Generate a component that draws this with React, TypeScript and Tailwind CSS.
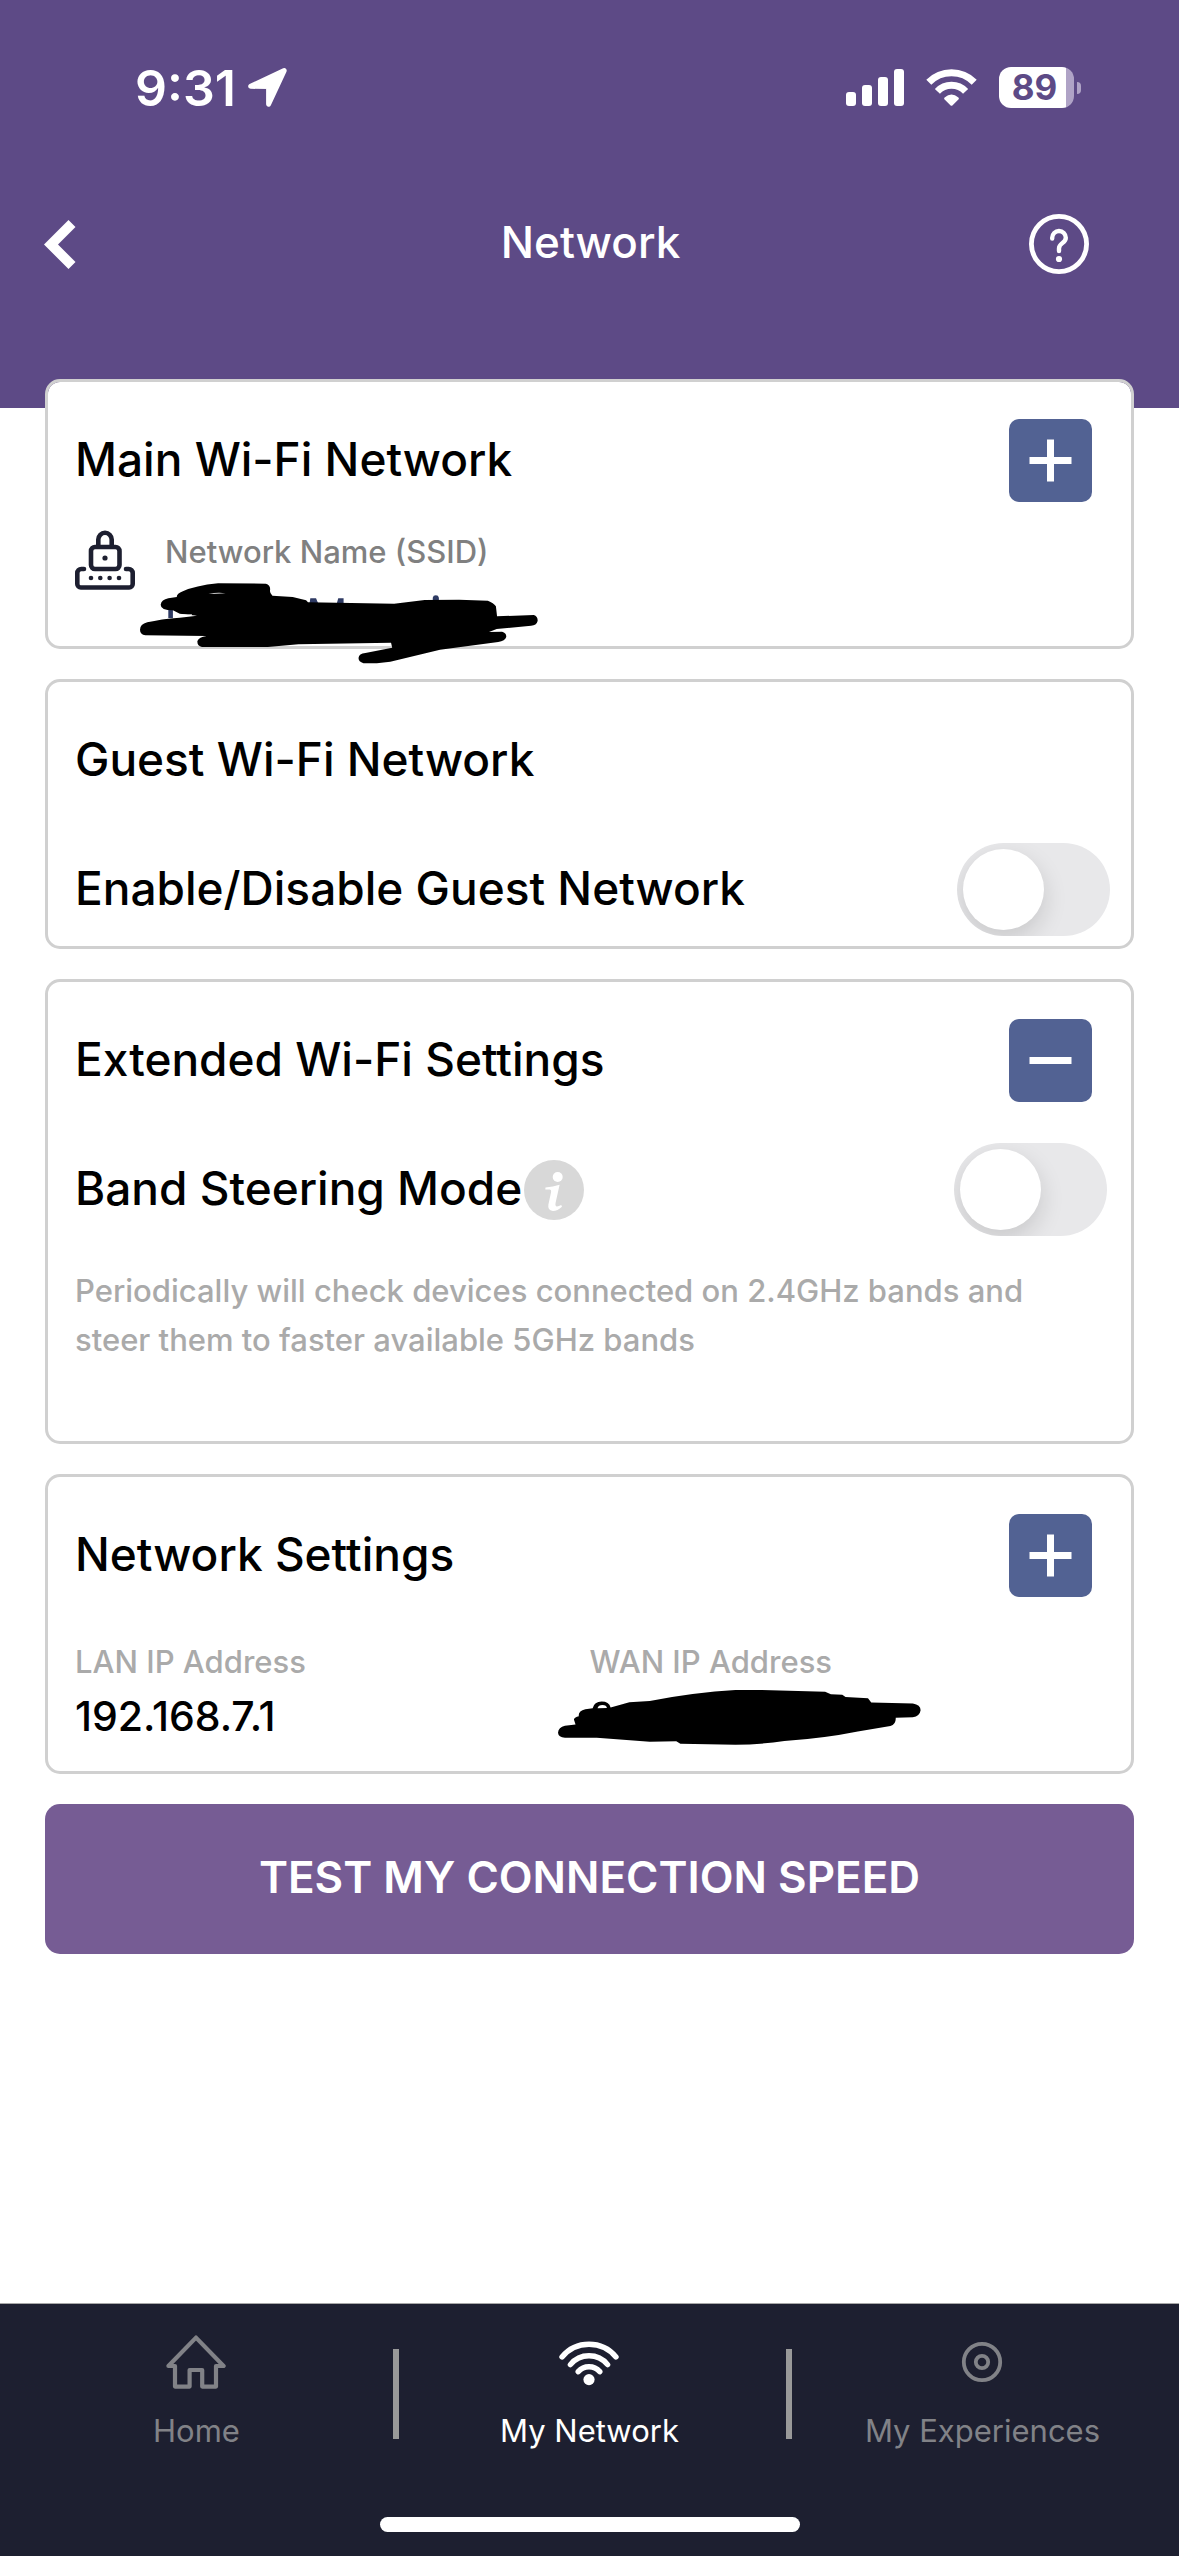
import React, { useState } from "react";

const StatusBar = () => {
  return (
    <div className="flex h-[41px] items-center justify-between pl-[135px] pr-[98px]">
      <div className="flex items-center gap-3">
        <span className="text-[50px] font-semibold leading-none">9:31</span>
        <svg className="h-[39px] w-[39px]" viewBox="0 0 39 39">
          <path
            d="M2.6 18.3 36.2 2.6 20.6 36.2V18.6Z"
            fill="currentColor"
            stroke="currentColor"
            strokeWidth="5"
            strokeLinejoin="round"
          />
        </svg>
      </div>
      <div className="flex items-center gap-[22px]">
        <svg className="h-[37px] w-[58px]" viewBox="0 0 58 37" fill="currentColor">
          <rect x="0" y="23" width="10" height="14" rx="3" />
          <rect x="16" y="16" width="10" height="21" rx="3" />
          <rect x="32" y="8" width="10" height="29" rx="3" />
          <rect x="48" y="0" width="10" height="37" rx="3" />
        </svg>
        <svg className="h-[37px] w-[51px]" viewBox="0 0 51 37" fill="none">
          <path
            d="M2.8 13.3A31.8 31.8 0 0 1 48.2 13.3M11.4 22.3A19.4 19.4 0 0 1 39.6 22.3"
            stroke="currentColor"
            strokeWidth="7"
          />
          <path
            d="M18.6 28.6Q25.5 22.6 32.4 28.6Q33.4 29.6 32.4 30.6L26.4 36.4Q25.5 37.2 24.6 36.4L18.6 30.6Q17.6 29.6 18.6 28.6Z"
            fill="currentColor"
          />
        </svg>
        <div className="flex items-center gap-[3px]">
          <div className="flex h-[41px] w-[75px] items-center justify-center rounded-xl bg-linear-to-r from-white from-89% to-[#afa3c6] to-89% pr-1 text-[35px] font-bold leading-none text-[#5d4a86]">
            89
          </div>
          <div className="h-3 w-1 rounded-r-full bg-[#afa3c6]"></div>
        </div>
      </div>
    </div>
  );
};

const Header = () => {
  return (
    <header className="bg-[#5d4a86] pt-[67px] pb-[134px] text-white">
      <StatusBar />
      <div className="mt-[106px] grid grid-cols-[1fr_auto_1fr] items-center pr-[90px] pl-11">
        <button type="button" aria-label="Back" className="w-8">
          <svg className="h-[49px] w-8" viewBox="0 0 32 49">
            <path d="M24.5 0 31.5 7 14 24.5 31.5 42 24.5 49 0 24.5Z" fill="currentColor" />
          </svg>
        </button>
        <h1 className="pb-1 pl-12 text-[44px] font-medium leading-none">Network</h1>
        <button type="button" aria-label="Help" className="justify-self-end">
          <svg className="h-[60px] w-[60px]" viewBox="0 0 60 60" fill="none">
            <circle cx="30" cy="30" r="27.6" stroke="currentColor" strokeWidth="4.8" />
            <path
              d="M23.2 24.5V23.8A6.8 6.8 0 0 1 36.8 23.8C36.8 29.5 30 28.5 30 34.5V37"
              stroke="currentColor"
              strokeWidth="4.4"
              strokeLinecap="round"
            />
            <circle cx="30" cy="45" r="3.1" fill="currentColor" />
          </svg>
        </button>
      </div>
    </header>
  );
};

const LockIcon = () => {
  return (
    <svg className="h-[60px] w-[60px] shrink-0" viewBox="0 0 60 60" fill="none">
      <g stroke="#1d1f30" strokeWidth="4.6">
        <path d="M23.3 16V9.5A6.7 6.7 0 0 1 36.7 9.5V16" />
        <rect x="16" y="17" width="28.5" height="22" rx="4" />
        <path
          d="M9 39H6.3A4 4 0 0 0 2.3 43V54A3.5 3.5 0 0 0 5.8 57.5H54.2A3.5 3.5 0 0 0 57.7 54V43A4 4 0 0 0 53.7 39H51"
          strokeLinecap="round"
        />
      </g>
      <g fill="#1d1f30">
        <circle cx="30" cy="28" r="2.6" />
        <circle cx="16" cy="48" r="2.3" />
        <circle cx="25.3" cy="48" r="2.3" />
        <circle cx="34.6" cy="48" r="2.3" />
        <circle cx="44" cy="48" r="2.3" />
      </g>
    </svg>
  );
};

const InfoIcon = () => {
  return (
    <svg className="h-[60px] w-[60px]" viewBox="0 0 60 60">
      <circle cx="30" cy="30" r="30" fill="#d8d8d8" />
      <circle cx="33.7" cy="17" r="5" fill="#fff" />
      <path
        d="M21.5 27.4Q29 26.8 35.6 24.8L31.6 42.8Q30.9 46.6 33 46.6Q34.8 46.4 37.2 45L38 46.8Q33.6 51 28.8 51Q23.4 50.6 24.4 44.6L27 32.6Q27.6 29.8 25.4 29.6L21.3 29.6Z"
        fill="#fff"
      />
    </svg>
  );
};

type CardProps = {
  title: string;
  open?: boolean;
  className: string;
  children: React.ReactNode;
};

const Card = ({ title, open, className, children }: CardProps) => {
  return (
    <section
      className={`rounded-[15px] border-3 border-[#d0d0d0] bg-white bg-clip-padding pt-[37px] pl-[27px] ${className}`}
    >
      <div className="flex h-[83px] items-center justify-between pr-[39px]">
        <h2 className="pb-1 text-[46px] font-medium leading-none">{title}</h2>
        {open !== undefined && (
          <button
            type="button"
            aria-label={open ? "Collapse" : "Expand"}
            className="h-[83px] w-[83px] rounded-[10px] bg-[#526293]"
          >
            <svg className="h-full w-full" viewBox="0 0 83 83" stroke="#fff" strokeWidth="7">
              <path d={open ? "M20.5 41.5H62.5" : "M20.5 41.5H62.5M41.5 20.5V62.5"} />
            </svg>
          </button>
        )}
      </div>
      {children}
    </section>
  );
};

type ToggleProps = {
  id: string;
  label: string;
  className: string;
  children?: React.ReactNode;
};

const Toggle = ({ id, label, className, children }: ToggleProps) => {
  const [checked, setChecked] = useState(false);
  return (
    <div className={`mt-[41px] flex items-center justify-between ${className}`}>
      <div className="flex items-center gap-0.5">
        <label htmlFor={id} className="pb-1 text-[46px] font-medium leading-none">
          {label}
        </label>
        {children}
      </div>
      <input
        id={id}
        type="checkbox"
        role="switch"
        checked={checked}
        onChange={(e) => setChecked(e.target.checked)}
        className="h-[93px] w-[153px] shrink-0 appearance-none overflow-hidden rounded-full bg-[#e8e8ea] p-1.5 before:block before:h-[81px] before:w-[81px] before:rounded-full before:bg-white before:shadow-[0_9px_24px_rgba(0,0,0,0.14)] checked:bg-[#526293] checked:before:translate-x-[60px]"
      />
    </div>
  );
};

const tabs = [
  {
    name: "Home",
    color: "text-[#818287]",
    icon: (
      <path
        d="M9 31H2.4L30 2.6 57.6 31H50V51.6H36.2V35H23.6V51.6H9Z"
        stroke="currentColor"
        strokeWidth="4.2"
        strokeLinejoin="round"
      />
    ),
  },
  {
    name: "My Network",
    color: "text-white",
    icon: (
      <>
        <path
          d="M3 22A35 35 0 0 1 57 22M11.4 29.6A24 24 0 0 1 48.6 29.6M19.2 36.6A14.4 14.4 0 0 1 40.8 36.6"
          stroke="currentColor"
          strokeWidth="5.4"
          strokeLinecap="round"
        />
        <circle cx="30" cy="44.6" r="5.6" fill="currentColor" />
      </>
    ),
  },
  {
    name: "My Experiences",
    color: "text-[#818287]",
    icon: (
      <>
        <circle cx="30" cy="27" r="18.2" stroke="currentColor" strokeWidth="3.8" />
        <circle cx="30" cy="27" r="6.2" stroke="currentColor" strokeWidth="3.8" />
      </>
    ),
  },
];

const TabBar = () => {
  return (
    <footer className="mt-auto border-t border-[#a7a7a7] bg-[#1d1f30] pb-6">
      <nav className="grid grid-cols-3 pt-[31px]">
        {tabs.map((tab, i) => (
          <div key={tab.name} className="flex h-[182px] justify-between">
            <div className={`mt-[14px] h-[90px] w-1.5 ${i > 0 ? "bg-[#999]" : ""}`}></div>
            <a href="#" className={`flex flex-col items-center gap-6 ${tab.color}`}>
              <svg className="h-[54px] w-[60px]" viewBox="0 0 60 54" fill="none">
                {tab.icon}
              </svg>
              <span className="text-[31px] leading-[36px]">{tab.name}</span>
            </a>
            <div className="w-1.5"></div>
          </div>
        ))}
      </nav>
      <div className="mx-auto h-[15px] w-[420px] rounded-full bg-white"></div>
    </footer>
  );
};

const App = () => {
  return (
    <div className="flex min-h-screen flex-col bg-white font-[Inter,sans-serif] text-black">
      <Header />
      <main className="-mt-[29px] flex flex-col gap-[30px] px-[45px] pb-[30px]">
        <Card title="Main Wi-Fi Network" open={false} className="pb-14">
          <div className="relative mt-7 flex h-[60px] gap-[30px]">
            <LockIcon />
            <p className="text-[31px] font-medium leading-[44px] text-[#808080]">
              Network Name (SSID)
            </p>
            <svg
              className="absolute top-[53px] left-[65px] h-[81px] w-[398px]"
              viewBox="366 640 1040 243"
              preserveAspectRatio="none"
            >
              <path
                d="M440 718H452V745H440ZM811 686H826L832 702H809ZM884 686H898V702H880ZM1131 692V684Q1132 677 1139 677T1147 684V692Z"
                fill="#2e3a63"
              />
              <path d="M366 780Q366 764 385 758Q420 748 470 744L515 738L470 732L452 722Q420 722 420 705Q422 690 440 686L462 682Q462 672 478 665Q510 648 570 641L695 642Q707 646 706 660Q704 670 712 678L765 682L800 692L805 698L1030 702L1110 691L1200 690L1275 693Q1290 700 1296 710L1299 740L1395 736Q1406 740 1405 754Q1402 768 1388 768L1298 778L1278 787L1312 786Q1324 790 1323 802Q1320 814 1302 817L1150 840L1020 876L985 881L950 881Q937 876 937 865Q938 852 955 850L1025 834L1022 819L860 822L780 824L700 832L640 832L528 832Q515 828 516 814Q520 802 540 799L380 797Q366 794 366 780Z" />
              <path d="M545 673Q570 666 590 671Z" fill="#fff" />
              <path d="M462 732Q480 735 502 734L500 738Q480 740 462 737Z" fill="#fff" />
            </svg>
          </div>
        </Card>

        <Card title="Guest Wi-Fi Network" className="pb-2.5">
          <Toggle id="guest" label="Enable/Disable Guest Network" className="pr-[21px]" />
        </Card>

        <Card title="Extended Wi-Fi Settings" open={true} className="pb-[77px]">
          <Toggle id="steering" label="Band Steering Mode" className="pr-6">
            <button type="button" aria-label="About band steering">
              <InfoIcon />
            </button>
          </Toggle>
          <p className="mt-[30px] pr-[39px] text-[31px] font-medium leading-[49px] text-[#aaa]">
            Periodically will check devices connected on 2.4GHz bands and steer
            them to faster available 5GHz bands
          </p>
        </Card>

        <Card title="Network Settings" open={false} className="pb-[22px]">
          <dl className="mt-[42px] grid grid-cols-2 pr-[27px]">
            <div>
              <dt className="text-[31px] font-medium leading-[45px] text-[#aaa]">
                LAN IP Address
              </dt>
              <dd className="text-[41px] font-medium leading-[65px]">192.168.7.1</dd>
            </div>
            <div className="relative">
              <dt className="text-[31px] font-medium leading-[45px] text-[#aaa]">
                WAN IP Address
              </dt>
              <dd>
                <svg
                  className="absolute top-[51px] -left-8 h-[55px] w-[363px]"
                  viewBox="45 689 890 166"
                  preserveAspectRatio="none"
                >
                  <path d="M45 818Q46 802 62 797L88 793L84 778Q86 770 96 768Q94 752 112 747L130 744Q134 724 152 724T174 742L196 734L220 726L270 722Q380 696 480 689H540L700 694L714 702L742 703L750 710L805 714L813 727L915 730Q934 734 934 750Q932 768 915 771L873 773Q874 792 860 798L780 814Q700 834 600 843Q540 854 480 854L345 851L335 844L270 845L140 833H62Q46 832 45 818Z" />
                  <path d="M142 744Q144 734 154 734T165 743Z" fill="#fff" />
                </svg>
              </dd>
            </div>
          </dl>
        </Card>

        <button
          type="button"
          className="h-[150px] rounded-[15px] bg-[#765c94] pb-1 text-[44px] font-semibold text-white"
        >
          TEST MY CONNECTION SPEED
        </button>
      </main>
      <TabBar />
    </div>
  );
};

export default App;
